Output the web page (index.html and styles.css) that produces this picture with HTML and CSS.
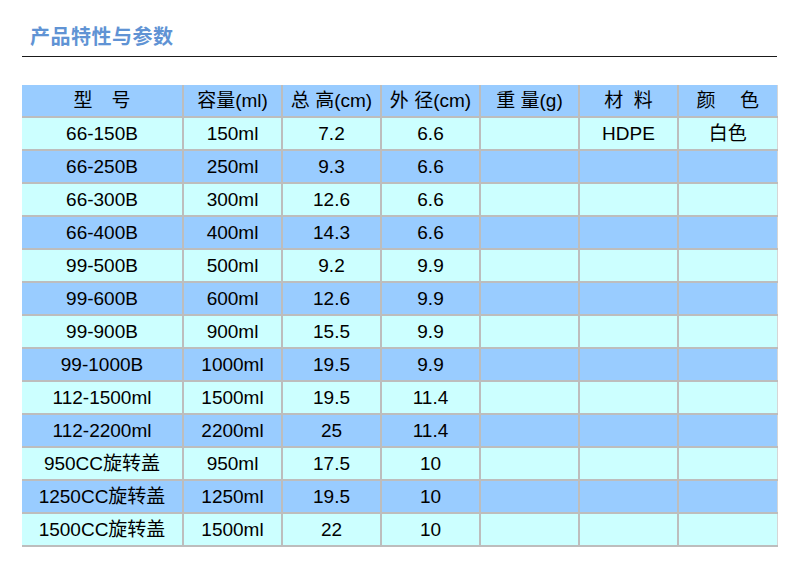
FILE: index.html
```html
<!DOCTYPE html>
<html lang="zh">
<head>
<meta charset="utf-8">
<title>产品特性与参数</title>
<link rel="stylesheet" href="styles.css">
</head>
<body>
<div class="page">
  <div class="heading"><h1 class="title">产品特性与参数</h1></div>
  <table class="spec">
    <colgroup>
      <col class="c-model"><col class="c-n"><col class="c-n"><col class="c-n"><col class="c-n"><col class="c-n"><col class="c-n">
    </colgroup>
    <thead>
      <tr><th>型　号</th><th>容量(ml)</th><th>总 高(cm)</th><th>外 径(cm)</th><th>重 量(g)</th><th>材&nbsp; 料</th><th>颜　&nbsp;色</th></tr>
    </thead>
    <tbody>
      <tr><td>66-150B</td><td>150ml</td><td>7.2</td><td>6.6</td><td></td><td>HDPE</td><td>白色</td></tr>
      <tr><td>66-250B</td><td>250ml</td><td>9.3</td><td>6.6</td><td></td><td></td><td></td></tr>
      <tr><td>66-300B</td><td>300ml</td><td>12.6</td><td>6.6</td><td></td><td></td><td></td></tr>
      <tr><td>66-400B</td><td>400ml</td><td>14.3</td><td>6.6</td><td></td><td></td><td></td></tr>
      <tr><td>99-500B</td><td>500ml</td><td>9.2</td><td>9.9</td><td></td><td></td><td></td></tr>
      <tr><td>99-600B</td><td>600ml</td><td>12.6</td><td>9.9</td><td></td><td></td><td></td></tr>
      <tr><td>99-900B</td><td>900ml</td><td>15.5</td><td>9.9</td><td></td><td></td><td></td></tr>
      <tr><td>99-1000B</td><td>1000ml</td><td>19.5</td><td>9.9</td><td></td><td></td><td></td></tr>
      <tr><td>112-1500ml</td><td>1500ml</td><td>19.5</td><td>11.4</td><td></td><td></td><td></td></tr>
      <tr><td>112-2200ml</td><td>2200ml</td><td>25</td><td>11.4</td><td></td><td></td><td></td></tr>
      <tr><td>950CC旋转盖</td><td>950ml</td><td>17.5</td><td>10</td><td></td><td></td><td></td></tr>
      <tr><td>1250CC旋转盖</td><td>1250ml</td><td>19.5</td><td>10</td><td></td><td></td><td></td></tr>
      <tr><td>1500CC旋转盖</td><td>1500ml</td><td>22</td><td>10</td><td></td><td></td><td></td></tr>
    </tbody>
  </table>
</div>
</body>
</html>
```
FILE: styles.css
```css
html, body {
  margin: 0;
  padding: 0;
  background: #ffffff;
}
.page {
  padding: 0 22px;
  font-family: "Liberation Sans", "Noto Sans CJK SC", sans-serif;
}
.heading {
  width: 755px;
  padding: 24px 0 8px 0;
  border-bottom: 1px solid #1a1a1a;
}
.title {
  margin: 0;
  padding-left: 8px;
  font-family: "Noto Sans CJK SC", sans-serif;
  font-size: 20px;
  line-height: 24px;
  font-weight: 700;
  color: #6093d4;
  letter-spacing: 0.5px;
}
.spec {
  margin-top: 28px;
  border-collapse: collapse;
  table-layout: fixed;
  width: 755px;
  font-size: 19px;
  color: #000000;
}
.c-model { width: 161px; }
.c-n { width: 99px; }
.spec th,
.spec td {
  height: 31px;
  padding: 0;
  text-align: center;
  vertical-align: middle;
  font-weight: 400;
  border-right: 2px solid #bdbdbd;
  border-bottom: 2px solid #bdbdbd;
  white-space: pre;
  line-height: 31px;
}
.spec th:last-child,
.spec td:last-child {
  border-right: 1px solid #d6d6d6;
}
.spec thead tr { background: #99ccff; }
.spec tbody tr:nth-child(odd) { background: #ccffff; }
.spec tbody tr:nth-child(even) { background: #99ccff; }
```
